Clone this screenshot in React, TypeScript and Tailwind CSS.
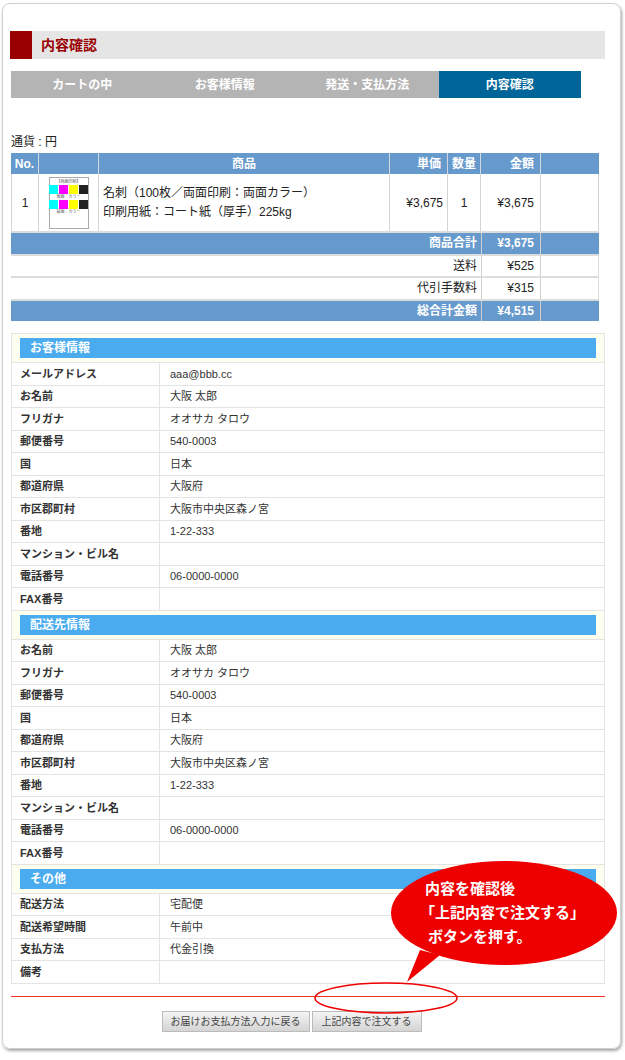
const F = { fontFamily: '"Liberation Sans", "Noto Sans CJK JP", sans-serif' }

const customer: [string, string][] = [
  ['メールアドレス', 'aaa@bbb.cc'],
  ['お名前', '大阪 太郎'],
  ['フリガナ', 'オオサカ タロウ'],
  ['郵便番号', '540-0003'],
  ['国', '日本'],
  ['都道府県', '大阪府'],
  ['市区郡町村', '大阪市中央区森ノ宮'],
  ['番地', '1-22-333'],
  ['マンション・ビル名', ''],
  ['電話番号', '06-0000-0000'],
  ['FAX番号', ''],
]
const delivery = customer.slice(1)
const other: [string, string][] = [
  ['配送方法', '宅配便'],
  ['配送希望時間', '午前中'],
  ['支払方法', '代金引換'],
  ['備考', ''],
]

function Section({ title, rows }: { title: string; rows: [string, string][] }) {
  return (
    <>
      <div className="bg-[#fdfdf0] px-[8px] py-[4px]">
        <div className="bg-[#4aabee] text-white font-bold text-[12px] h-[20px] leading-[20px] pl-[10px]">{title}</div>
      </div>
      {rows.map(([k, v]) => (
        <div key={k} className="flex border-t border-[#e4e4e4] h-[22.5px] items-center text-[11px] text-[#333]">
          <div className="w-[148px] pl-[8px] font-bold h-full flex items-center border-r border-[#e4e4e4]">{k}</div>
          <div className="pl-[10px]">{v}</div>
        </div>
      ))}
    </>
  )
}

function Thumb() {
  const sw = ['bg-[#00ffff]', 'bg-[#ff00ff]', 'bg-[#ffff00]', 'bg-[#222]']
  return (
    <div className="w-[40px] h-[52px] border border-[#aaa] bg-white flex flex-col items-center text-[4px] leading-[6px] text-[#555] pt-[1px]">
      <div>【両面印刷】</div>
      <div className="flex gap-[1px]">{sw.map((c) => <div key={c} className={`w-[9px] h-[9px] ${c}`} />)}</div>
      <div>表面：カラー</div>
      <div className="flex gap-[1px]">{sw.map((c) => <div key={c} className={`w-[9px] h-[9px] ${c}`} />)}</div>
      <div>裏面：カラー</div>
    </div>
  )
}

export default function App() {
  const th = 'bg-[#6699cc] text-white font-bold text-[12px] border-r border-[#d0d8e0]'
  const td = 'border-r border-[#d4d4d4] text-[12px] text-[#222]'
  return (
    <div className="relative w-[625px] h-[1060px] bg-white" style={F}>
      <div className="absolute left-[2px] top-[3px] w-[619px] h-[1046px] rounded-[8px] border border-[#cfcfcf] shadow-[1px_2px_3px_rgba(0,0,0,0.35)]" />
      <div className="relative pl-[10px] pr-[20px] pt-[31px]">
        <div className="flex items-center h-[28px] bg-[#e5e5e5] w-[595px]">
          <div className="w-[22px] h-full bg-[#990000]" />
          <div className="ml-[9px] text-[#990000] text-[14px] font-bold">内容確認</div>
        </div>
        <div className="mt-[12px] ml-[1px] flex h-[27px] w-[570px] text-[12px] font-bold text-white">
          {['カートの中', 'お客様情報', '発送・支払方法'].map((t) => (
            <div key={t} className="flex-1 bg-[#b4b4b4] flex items-center justify-center">{t}</div>
          ))}
          <div className="flex-1 bg-[#006699] flex items-center justify-center">内容確認</div>
        </div>
        <div className="mt-[35px] ml-[1px] text-[12px] text-[#222]">通貨 : 円</div>
        <div className="ml-[1px] mt-[2px] w-[588px]">
          <div className="flex h-[21px] items-center">
            <div className={`${th} w-[28px] h-full flex items-center justify-center`}>No.</div>
            <div className={`${th} w-[60px] h-full`} />
            <div className={`${th} w-[291px] h-full flex items-center justify-center`}>商品</div>
            <div className={`${th} w-[58px] h-full flex items-center justify-end pr-[6px]`}>単価</div>
            <div className={`${th} w-[33px] h-full flex items-center justify-center`}>数量</div>
            <div className={`${th} w-[60px] h-full flex items-center justify-end pr-[6px]`}>金額</div>
            <div className="bg-[#6699cc] flex-1 h-full" />
          </div>
          <div className="flex h-[57px] border-l border-r border-[#d4d4d4]">
            <div className={`${td} w-[27px] flex items-center justify-center`}>1</div>
            <div className={`${td} w-[60px] flex items-center justify-center`}><Thumb /></div>
            <div className={`${td} w-[291px] flex flex-col justify-center pl-[4px] leading-[19px]`}>
              <div>名刺（100枚／両面印刷：両面カラー）</div>
              <div>印刷用紙：コート紙（厚手）225kg</div>
            </div>
            <div className={`${td} w-[58px] flex items-center justify-end pr-[4px]`}>¥3,675</div>
            <div className={`${td} w-[33px] flex items-center justify-center`}>1</div>
            <div className={`${td} w-[60px] flex items-center justify-end pr-[6px]`}>¥3,675</div>
            <div className="flex-1" />
          </div>
          {[
            ['商品合計', '¥3,675', true],
            ['送料', '¥525', false],
            ['代引手数料', '¥315', false],
            ['総合計金額', '¥4,515', true],
          ].map(([k, v, b]) => (
            <div key={k as string} className={`flex h-[22.5px] items-center text-[12px] border-t-2 border-[#dcdcdc] ${b ? 'bg-[#6699cc] text-white font-bold' : 'text-[#222] border-r border-[#d4d4d4]'}`}>
              <div className="w-[470px] text-right pr-[4px]">{k}</div>
              <div className="w-[60px] h-full flex items-center justify-end pr-[6px] border-x border-[#d0d0d0]">{v}</div>
            </div>
          ))}
        </div>
        <div className="mt-[12px] ml-[1px] w-[594px] border border-[#e4e4e4]">
          <Section title="お客様情報" rows={customer} />
          <div className="border-t border-[#e4e4e4]" />
          <Section title="配送先情報" rows={delivery} />
          <div className="border-t border-[#e4e4e4]" />
          <Section title="その他" rows={other} />
        </div>
        <div className="mt-[12px] ml-[1px] w-[594px] border-t border-[#ee3322]" />
        <div className="mt-[14px] flex justify-center pr-[32px] text-[10px] text-[#444]">
          <div className="h-[21px] px-[8px] flex items-center border border-[#bbb] bg-gradient-to-b from-[#f4f4f4] to-[#d4d4d4]">お届けお支払方法入力に戻る</div>
          <div className="h-[21px] ml-[2px] px-[9px] flex items-center border border-[#bbb] bg-gradient-to-b from-[#f4f4f4] to-[#d4d4d4]">上記内容で注文する</div>
        </div>
      </div>
      <svg className="absolute left-0 top-0 pointer-events-none" width="625" height="1060">
        <ellipse cx="386" cy="998" rx="71" ry="15" fill="none" stroke="#e00" strokeWidth="1.5" />
        <path d="M420 950 L407 982 L440 955 Z" fill="#ee0000" />
        <ellipse cx="504" cy="913" rx="113" ry="52" fill="#ee0000" />
      </svg>
      <div className="absolute left-[420px] top-[877px] text-white font-bold text-[15px] leading-[24px]">
        <div className="pl-[5px]">内容を確認後</div>
        <div>「上記内容で注文する」</div>
        <div className="pl-[8px]">ボタンを押す。</div>
      </div>
    </div>
  )
}
